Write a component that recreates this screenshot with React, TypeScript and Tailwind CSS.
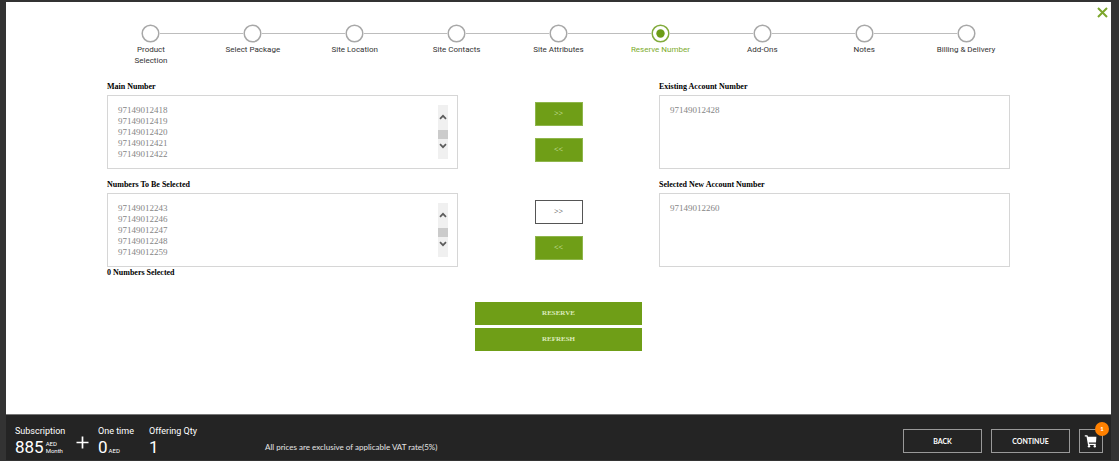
import { useRef, useState } from "react";

const steps = [
  "Product Selection",
  "Select Package",
  "Site Location",
  "Site Contacts",
  "Site Attributes",
  "Reserve Number",
  "Add-Ons",
  "Notes",
  "Billing & Delivery",
];
const activeStep = 5;

const mainNumbers = ["97149012418", "97149012419", "97149012420", "97149012421", "97149012422"];
const availableNumbers = ["97149012243", "97149012246", "97149012247", "97149012248", "97149012259"];

function Stepper() {
  return (
    <ol className="mx-[94px] flex pt-[22px] font-['Roboto',sans-serif]">
      {steps.map((step, i) => (
        <li key={step} className="flex flex-1 flex-col items-center" aria-current={i === activeStep ? "step" : undefined}>
          <div className="flex w-full items-center">
            <span className={i === 0 ? "h-px flex-1" : "h-px flex-1 bg-[#bdbdbd]"} />
            <svg className="size-[19px]" viewBox="0 0 19 19" fill="none" aria-hidden="true">
              <circle cx="9.5" cy="9.5" r="8.3" stroke={i === activeStep ? "#82ab3c" : "#a8a8a8"} strokeWidth="1.5" />
              {i === activeStep && <circle cx="9.5" cy="9.5" r="4.2" fill="#6c9c16" />}
            </svg>
            <span className={i === steps.length - 1 ? "h-px flex-1" : "h-px flex-1 bg-[#bdbdbd]"} />
          </div>
          <span
            className={
              i === activeStep
                ? "max-w-[70px] pt-px text-center text-[8px] leading-[11px] text-[#7cab2b]"
                : "max-w-[70px] pt-px text-center text-[8px] leading-[11px] text-[#333]"
            }
          >
            {i === 0 ? (
              <>
                Product
                <br />
                Selection
              </>
            ) : (
              step
            )}
          </span>
        </li>
      ))}
    </ol>
  );
}

type NumberListProps = { id: string; label: string; numbers: string[]; scroll?: boolean };

function NumberList({ id, label, numbers, scroll }: NumberListProps) {
  const list = useRef<HTMLSelectElement>(null);
  return (
    <div className="flex min-w-0 flex-1 flex-col">
      <label htmlFor={id} className="h-[14px] text-[8px] leading-[11px] font-bold text-black">
        {label}
      </label>
      <div className="flex h-[74px] border border-[#d6d6d6] px-[9px] py-[9px]">
        <select
          id={id}
          ref={list}
          multiple
          size={5}
          className="h-[55px] min-w-0 flex-1 appearance-none overflow-y-auto bg-transparent p-0 pl-px text-[9px] leading-[11px] text-[#858585] outline-none [scrollbar-width:none]"
        >
          {numbers.map((n) => (
            <option key={n} className="h-[11px] min-h-0 p-0 text-[9px] leading-[11px]">
              {n}
            </option>
          ))}
        </select>
        {scroll && (
          <div className="flex h-[54px] w-[10px] flex-col items-center bg-[#f0f0f0] pt-[8px]">
            <button type="button" aria-label="Scroll up" onClick={() => list.current?.scrollBy(0, -11)}>
              <svg className="block h-[8px] w-[8px]" viewBox="0 0 8 8" fill="none" stroke="#5c5c5c" strokeWidth="1.7">
                <path d="M1 5.8 4 2.8 7 5.8" />
              </svg>
            </button>
            <span className="mt-[9px] mb-[3px] h-[9px] w-full bg-[#cbcbcb]" />
            <button type="button" aria-label="Scroll down" onClick={() => list.current?.scrollBy(0, 11)}>
              <svg className="block h-[8px] w-[8px]" viewBox="0 0 8 8" fill="none" stroke="#5c5c5c" strokeWidth="1.7">
                <path d="M1 2.2 4 5.2 7 2.2" />
              </svg>
            </button>
          </div>
        )}
      </div>
    </div>
  );
}

const solid = "h-6 w-12 border border-[#8fb64c] bg-[#6f9e17] text-[8px] text-[#dcebbd]";
const outlined = "h-6 w-12 border border-[#555] bg-white text-[8px] text-[#333]";

function MoveButtons({ addOutlined }: { addOutlined?: boolean }) {
  return (
    <div className="flex w-[201px] flex-col items-center gap-3 pt-[21px]">
      <button type="button" aria-label="Move right" className={addOutlined ? outlined : solid}>
        &gt;&gt;
      </button>
      <button type="button" aria-label="Move left" className={solid}>
        &lt;&lt;
      </button>
    </div>
  );
}

function Footer() {
  return (
    <footer className="flex h-[46px] items-start border-t border-[#777] bg-[#242424] text-white">
      <dl className="flex pt-[11px] pl-[9px] font-['Roboto',sans-serif]">
        <div className="w-[61px]">
          <dt className="text-[9px] leading-[11px]">Subscription</dt>
          <dd className="flex items-center gap-[2px] text-[17px] leading-[20px]">
            885
            <span className="text-[6px] leading-[7px]">
              AED
              <br />
              Month
            </span>
          </dd>
        </div>
        <div className="flex w-[22px] items-center pt-[2px]" aria-hidden="true">
          <svg className="size-[13px]" viewBox="0 0 13 13" stroke="white" strokeWidth="1.7">
            <path d="M.5 6.5h12M6.5.5v12" />
          </svg>
        </div>
        <div className="w-[51px]">
          <dt className="text-[9px] leading-[11px]">One time</dt>
          <dd className="flex items-baseline gap-px text-[17px] leading-[20px]">
            0<span className="text-[6px] leading-[7px]">AED</span>
          </dd>
        </div>
        <div className="w-[52px]">
          <dt className="text-[9px] leading-[11px]">Offering Qty</dt>
          <dd className="text-[17px] leading-[20px]">1</dd>
        </div>
      </dl>
      <p className="ml-[64px] pt-[27px] font-['Lato',sans-serif] text-[8px] leading-[11px] text-[#e4e4e4]">
        All prices are exclusive of applicable VAT rate(5%)
      </p>
      <div className="mr-[8px] ml-auto flex gap-[9px] pt-[14px] font-['Lato',sans-serif] text-[7px] font-bold">
        <button type="button" className="h-6 w-[79px] border border-[#999]">
          BACK
        </button>
        <button type="button" className="h-6 w-[79px] border border-[#999]">
          CONTINUE
        </button>
        <button type="button" aria-label="Cart, 1 item" className="relative flex size-6 items-center justify-center border border-[#999]">
          <svg className="h-[14px] w-[14px]" viewBox="0 0 14 14" fill="white" aria-hidden="true">
            <path d="M.8 1.3h2.6l.6 1.5h8.4L12 8.6H4.8l.2 1.1h6.8v1.2H4L2.5 2.6H.8z" />
            <circle cx="5" cy="12.2" r="1.2" />
            <circle cx="10.8" cy="12.2" r="1.2" />
          </svg>
          <span className="absolute -top-[8px] -right-[7px] flex size-[14px] items-center justify-center rounded-full bg-[#ff8000] text-[6px] leading-none">
            1
          </span>
        </button>
      </div>
    </footer>
  );
}

export default function App() {
  const [open, setOpen] = useState(true);
  return (
    <div className="flex min-h-screen flex-col bg-[#333] pt-[2px] pr-[8px] pb-px pl-[6px] font-['Liberation_Serif',serif]">
      {open && (
        <div className="relative flex flex-1 flex-col bg-white">
          <button type="button" aria-label="Close" onClick={() => setOpen(false)} className="absolute top-[5px] right-[3px]">
            <svg className="size-[11px]" viewBox="0 0 11 11" stroke="#7ca62c" strokeWidth="2" aria-hidden="true">
              <path d="M1 1 10 10M10 1 1 10" />
            </svg>
          </button>
          <Stepper />
          <main className="mr-[101px] ml-[101px] flex flex-1 flex-col pt-[15px]">
            <div className="flex">
              <NumberList id="main" label="Main Number" numbers={mainNumbers} scroll />
              <MoveButtons />
              <NumberList id="existing" label="Existing Account Number" numbers={["97149012428"]} />
            </div>
            <div className="mt-[10px] flex">
              <NumberList id="available" label="Numbers To Be Selected" numbers={availableNumbers} scroll />
              <MoveButtons addOutlined />
              <NumberList id="selected" label="Selected New Account Number" numbers={["97149012260"]} />
            </div>
            <p className="text-[8px] leading-[11px] font-bold text-black">0 Numbers Selected</p>
            <div className="mx-auto mt-[24px] flex w-[167px] flex-col gap-[3px] pb-4 text-[7px] font-bold text-[#dcebbd]">
              <button type="button" className="h-[23px] bg-[#6f9e17]">
                RESERVE
              </button>
              <button type="button" className="h-[23px] bg-[#6f9e17]">
                REFRESH
              </button>
            </div>
          </main>
          <Footer />
        </div>
      )}
    </div>
  );
}
